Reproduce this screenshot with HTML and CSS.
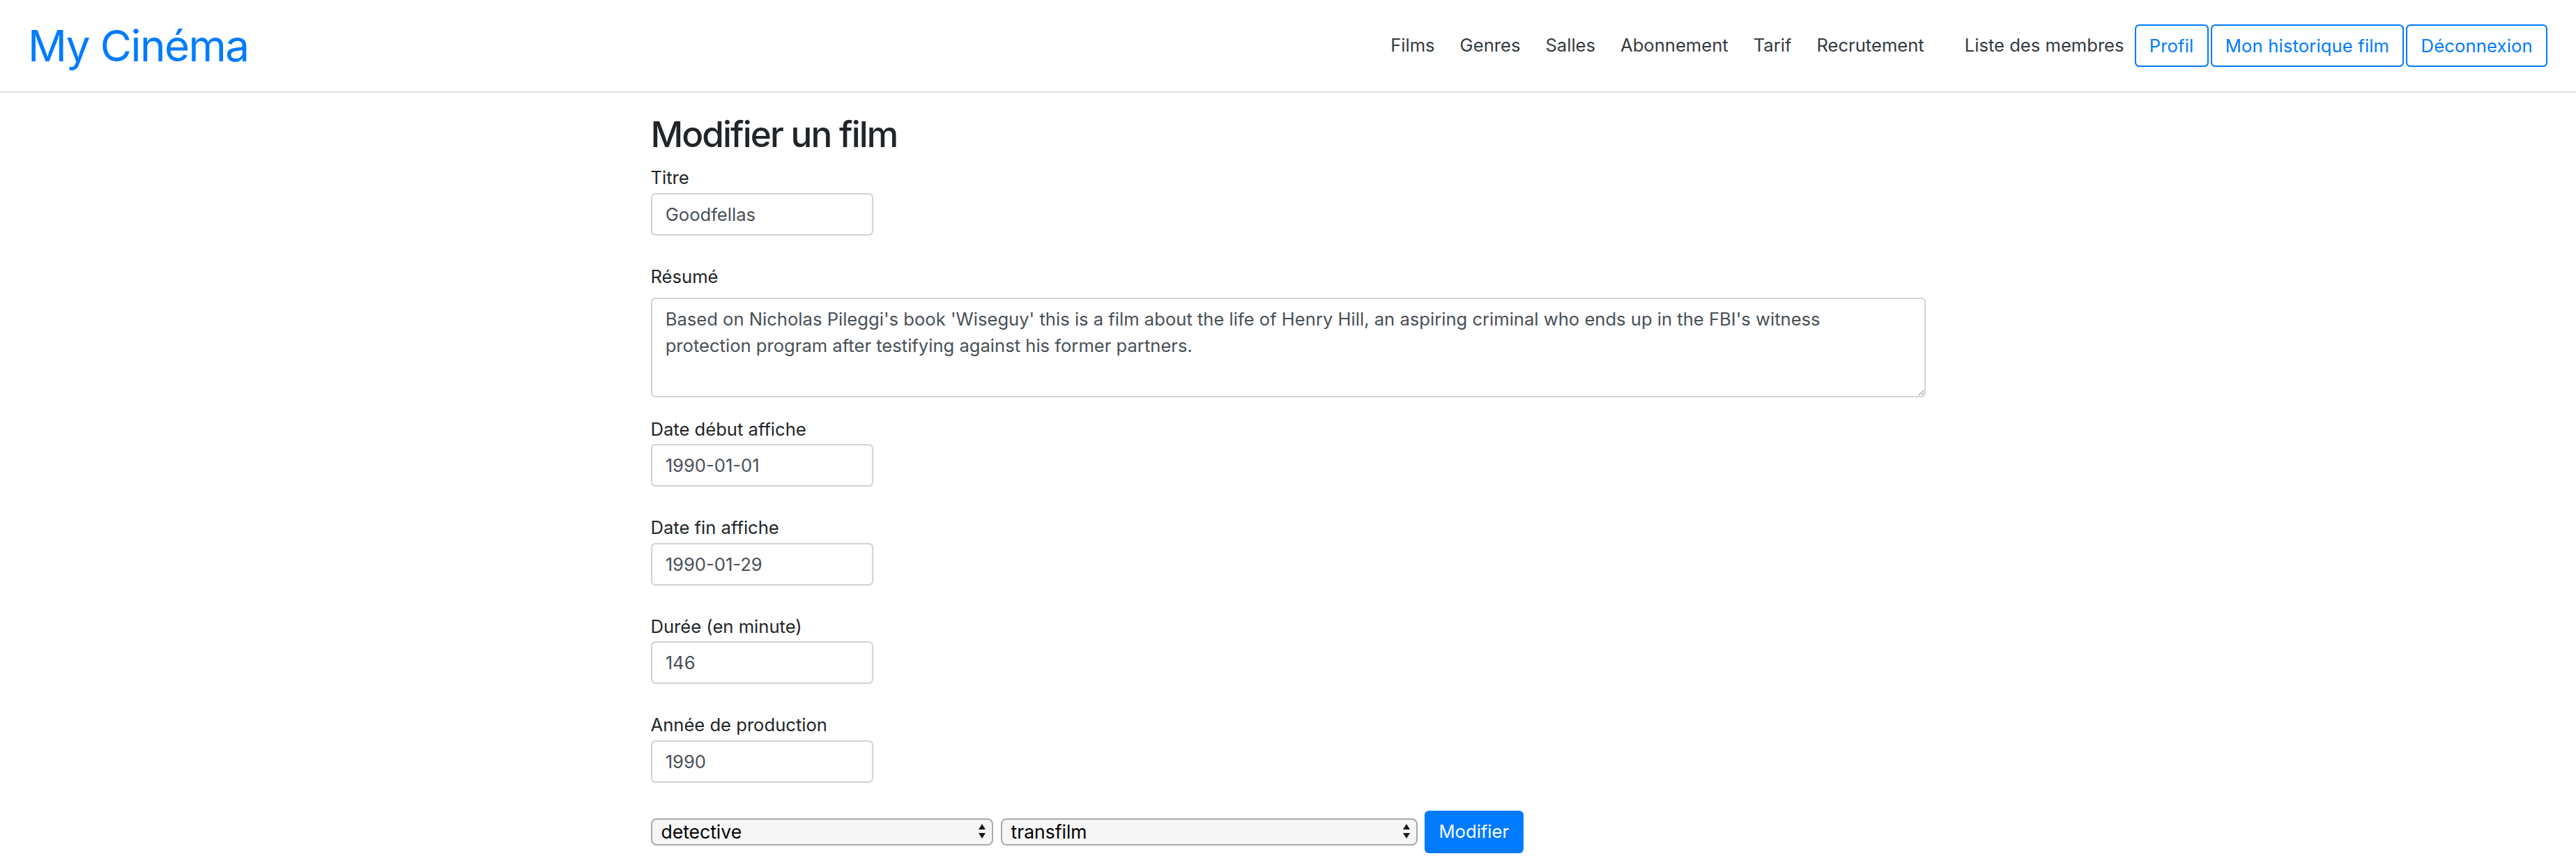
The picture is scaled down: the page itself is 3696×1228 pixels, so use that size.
FILE: index.html
```html
<!DOCTYPE html>
<html lang="fr">
<head>
<meta charset="utf-8">
<title>My Cinéma - Modifier un film</title>
<link rel="stylesheet" href="styles.css">
</head>
<body>
<nav class="navbar">
  <a class="brand" href="#">My Cinéma</a>
  <ul class="nav-main">
    <li><a class="nav-link" href="#">Films</a></li>
    <li><a class="nav-link" href="#">Genres</a></li>
    <li><a class="nav-link" href="#">Salles</a></li>
    <li><a class="nav-link" href="#">Abonnement</a></li>
    <li><a class="nav-link" href="#">Tarif</a></li>
    <li><a class="nav-link" href="#">Recrutement</a></li>
  </ul>
  <ul class="nav-user">
    <li><a class="nav-link nav-link-last" href="#">Liste des membres</a></li>
    <li><a class="btn-outline" href="#">Profil</a></li>
    <li><a class="btn-outline" href="#">Mon historique film</a></li>
    <li><a class="btn-outline" href="#">Déconnexion</a></li>
  </ul>
</nav>
<main class="container">
  <h2 class="title">Modifier un film</h2>
  <form class="form">
    <div class="field">
      <label class="label" for="titre">Titre</label>
      <input class="input" id="titre" type="text" value="Goodfellas">
    </div>
    <div class="field field-text">
      <label class="label" for="resume">Résumé</label>
      <textarea class="textarea" id="resume">Based on Nicholas Pileggi's book 'Wiseguy' this is a film about the life of Henry Hill, an aspiring criminal who ends up in the FBI's witness protection program after testifying against his former partners.</textarea>
    </div>
    <div class="field">
      <label class="label" for="debut">Date début affiche</label>
      <input class="input" id="debut" type="text" value="1990-01-01">
    </div>
    <div class="field">
      <label class="label" for="fin">Date fin affiche</label>
      <input class="input" id="fin" type="text" value="1990-01-29">
    </div>
    <div class="field">
      <label class="label" for="duree">Durée (en minute)</label>
      <input class="input" id="duree" type="text" value="146">
    </div>
    <div class="field">
      <label class="label" for="annee">Année de production</label>
      <input class="input" id="annee" type="text" value="1990">
    </div>
    <div class="actions">
      <span class="select-wrap select-genre">
        <select class="select"><option>detective</option></select>
        <svg class="select-arrows" width="10" height="21" viewBox="0 0 10 21"><path d="M5 0 L10 8 L0 8 Z M0 13 L10 13 L5 21 Z" fill="#1a1a1a"/></svg>
      </span>
      <span class="select-wrap select-distrib">
        <select class="select"><option>transfilm</option></select>
        <svg class="select-arrows" width="10" height="21" viewBox="0 0 10 21"><path d="M5 0 L10 8 L0 8 Z M0 13 L10 13 L5 21 Z" fill="#1a1a1a"/></svg>
      </span>
      <button class="btn-primary" type="submit">Modifier</button>
    </div>
  </form>
</main>
</body>
</html>
```
FILE: styles.css
```css
* {
  box-sizing: border-box;
}

body {
  margin: 0;
  font-family: Inter, "Noto Sans", sans-serif;
  font-size: 25.6px;
  line-height: 1.5;
  color: #212529;
  background: #ffffff;
}

/* ---------- navbar ---------- */
.navbar {
  display: flex;
  align-items: center;
  height: 133px;
  padding: 0 41px 0 40px;
  border-bottom: 2px solid #dfe2e6;
}

.brand {
  font-size: 62px;
  line-height: 1;
  letter-spacing: -1.6px;
  color: #007bff;
  text-decoration: none;
}

.nav-main {
  display: flex;
  list-style: none;
  margin: 0 0 0 auto;
  padding: 0;
}

.nav-user {
  display: flex;
  align-items: center;
  gap: 3px;
  list-style: none;
  margin: 0 0 0 22px;
  padding: 0;
}

.nav-link {
  display: block;
  padding: 0 18px;
  line-height: 38.4px;
  color: #343a40;
  text-decoration: none;
}

.nav-link-last {
  padding-right: 12px;
}

.btn-outline {
  display: block;
  height: 61px;
  line-height: 57px;
  padding: 0 19.2px;
  border: 2px solid #007bff;
  border-radius: 6.4px;
  color: #007bff;
  letter-spacing: 0.15px;
  text-decoration: none;
}

/* ---------- form ---------- */
.container {
  width: 1829px;
  margin: 0 auto;
  padding-top: 29px;
}

.title {
  margin: 0 0 12.8px;
  font-size: 51.2px;
  line-height: 1.2;
  font-weight: 500;
  letter-spacing: -1.9px;
}

.field {
  margin-bottom: 40px;
}

.field-text {
  margin-bottom: 27px;
}

.label {
  display: block;
  margin-bottom: 2px;
  line-height: 38.4px;
}

.input {
  display: block;
  width: 319px;
  height: 61px;
  padding: 0 19.2px;
  border: 2px solid #ced4da;
  border-radius: 6.4px;
  font: inherit;
  color: #495057;
  background: #fff;
}

.textarea {
  display: block;
  width: 100%;
  height: 143px;
  margin-top: 11px;
  padding: 9.6px 19.2px;
  border: 2px solid #ced4da;
  border-radius: 6.4px;
  font: inherit;
  line-height: 38.4px;
  color: #495057;
  resize: vertical;
}

.actions {
  display: flex;
  align-items: center;
}

.select-wrap {
  position: relative;
  display: block;
}

.select-genre {
  width: 491px;
  margin-right: 11px;
}

.select-distrib {
  width: 598px;
  margin-right: 10px;
}

.select {
  -webkit-appearance: none;
  appearance: none;
  display: block;
  width: 100%;
  height: 39px;
  padding: 0 36px 0 13px;
  border: 2px solid #a9a9a9;
  border-radius: 8px;
  background: #f6f6f6;
  font-family: inherit;
  font-size: 26.5px;
  color: #000;
}

.select-arrows {
  position: absolute;
  top: 8px;
  right: 11px;
  pointer-events: none;
}

.btn-primary {
  height: 61px;
  padding: 0 21px;
  border: none;
  border-radius: 6.4px;
  background: #007bff;
  color: #fff;
  font: inherit;
}
```
